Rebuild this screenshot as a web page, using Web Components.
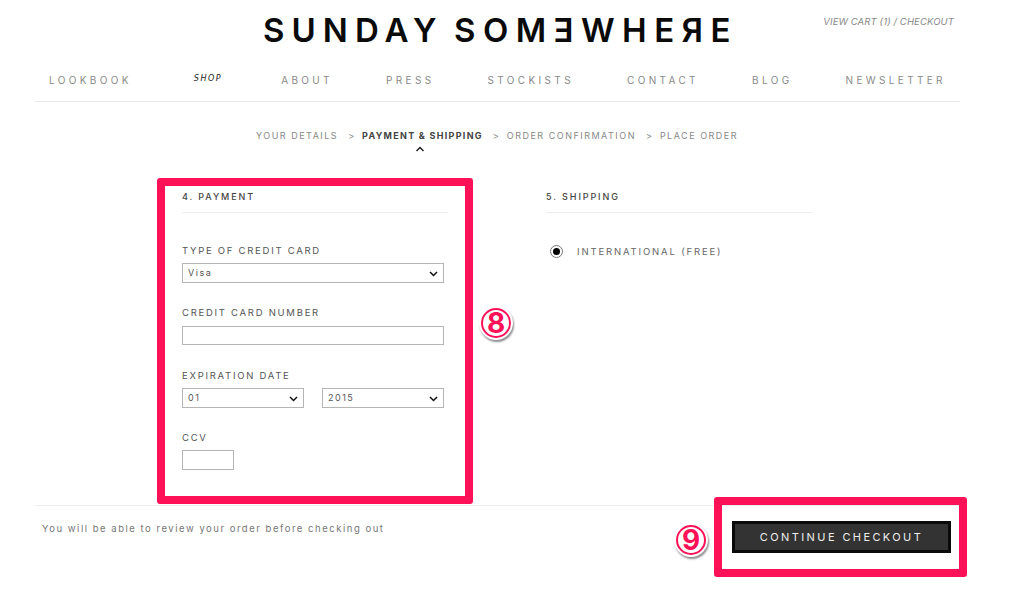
<!DOCTYPE html>
<html><head><meta charset="utf-8"><title>Sunday Somewhere</title>
<style>
html,body{margin:0;padding:0;background:#fff}
body{font-family:Inter,"Liberation Sans",sans-serif;color:#555;width:1010px;height:603px;overflow:hidden;position:relative}
</style></head><body>
<ss-page>
  <ss-header></ss-header>
  <ss-steps></ss-steps>
  <ss-columns>
    <ss-section heading="4. PAYMENT">
      <ss-field label="TYPE OF CREDIT CARD" style="--top:31px"><ss-select value="Visa" style="width:262px"></ss-select></ss-field>
      <ss-field label="CREDIT CARD NUMBER" style="--top:23px;--mb:6px"><ss-input style="width:262px;--h:19px"></ss-input></ss-field>
      <ss-field label="EXPIRATION DATE" style="--top:24px">
        <ss-row><ss-select value="01" style="width:122px"></ss-select><ss-select value="2015" style="width:122px"></ss-select></ss-row>
      </ss-field>
      <ss-field label="CCV" style="--top:23px"><ss-input style="width:52px;--h:20px"></ss-input></ss-field>
    </ss-section>
    <ss-section heading="5. SHIPPING"><ss-radio label="INTERNATIONAL (FREE)"></ss-radio></ss-section>
  </ss-columns>
  <ss-footer></ss-footer>
</ss-page>
<ss-callout style="left:157px;top:178px;width:316px;height:326px"></ss-callout>
<ss-callout style="left:714px;top:497px;width:253px;height:80px"></ss-callout>
<ss-badge n="8" style="left:479px;top:306px"></ss-badge>
<ss-badge n="9" style="left:674px;top:523px"></ss-badge>
<script>
function def(name, html){
  customElements.define(name, class extends HTMLElement{
    constructor(){super();this.attachShadow({mode:'open'}).innerHTML=html;}
    connectedCallback(){
      this.shadowRoot.querySelectorAll('[data-attr]').forEach(e=>{e.textContent=this.getAttribute(e.dataset.attr)||''});
    }
  });
}
def('ss-page',`<style>:host{display:block}</style><slot></slot>`);
def('ss-header',`<style>
:host{display:block;margin:0 50px 0 35px;height:102px;box-sizing:border-box;border-bottom:1px solid #e9e9e9;position:relative}
.logo{display:block;text-align:center;font:600 33px/36px Inter,sans-serif;letter-spacing:7.05px;word-spacing:-5px;color:#0a0a0a;padding:12px 0 0 6px;height:36px;white-space:pre}
.logo span{letter-spacing:7.45px}
.cart{position:absolute;right:6px;top:15px;font:italic 400 9.5px/13px Inter,sans-serif;color:#888;letter-spacing:.12px}
nav{display:flex;justify-content:space-between;padding:25px 14px 0 14px;font:400 10px/14px Inter,sans-serif;letter-spacing:3.35px;color:#8a8a8a}
nav i{font:italic 400 8px/12px "DejaVu Sans",sans-serif;color:#222;letter-spacing:1.5px;padding:0 5px 0 9px}
nav .n{margin-left:1px}
</style>
<div class="logo">SUNDAY <span>SOMƎWHEЯE</span></div>
<div class="cart">VIEW CART (1) / CHECKOUT</div>
<nav><span>LOOKBOOK</span><i>SHOP</i><span class="n">ABOUT</span><span>PRESS</span><span>STOCKISTS</span><span>CONTACT</span><span>BLOG</span><span>NEWSLETTER</span></nav>`);
def('ss-steps',`<style>
:host{display:flex;justify-content:center;align-items:flex-start;gap:8px;height:74px;padding:27px 0 0 0;box-sizing:border-box;margin-left:-16px;font:400 9px/13px Inter,sans-serif;letter-spacing:1.5px;color:#888;white-space:nowrap}
b{font-weight:700;color:#444;position:relative;letter-spacing:1.28px}
b svg{position:absolute;left:53px;top:17px}
.g{margin-left:2px;letter-spacing:0}
</style>
<span>YOUR DETAILS</span><span class="g">&gt;</span><b>PAYMENT &amp; SHIPPING<svg width="10" height="6" viewBox="0 0 10 6"><path d="M1.5 5 5 1.5 8.500 5" fill="none" stroke="#222" stroke-width="1.500"/></svg></b><span class="g">&gt;</span><span>ORDER CONFIRMATION</span><span class="g">&gt;</span><span>PLACE ORDER</span>`);
def('ss-columns',`<style>:host{display:flex;gap:98px;padding-left:182px;height:329px;align-items:flex-start}</style><slot></slot>`);
def('ss-section',`<style>
:host{display:block;width:266px}
h2{margin:0;padding:14px 0 9px;height:13px;font:500 9px/13px Inter,sans-serif;letter-spacing:1.9px;color:#444;border-bottom:1px solid #eee}
</style><h2 data-attr="heading"></h2><slot></slot>`);
def('ss-field',`<style>
:host{display:block;padding-top:var(--top,24px)}
label{display:block;font:400 9.5px/14px Inter,sans-serif;letter-spacing:1.73px;color:#555;margin-bottom:var(--mb,5px)}
</style><label data-attr="label"></label><slot></slot>`);
def('ss-row',`<style>:host{display:flex;gap:18px}</style><slot></slot>`);
def('ss-select',`<style>
:host{display:block;box-sizing:border-box;height:20px;border:1px solid #b5b5b5;position:relative;font:400 9px/17px Inter,sans-serif;letter-spacing:1.5px;color:#555;padding-left:5px}
svg{position:absolute;right:5px;top:7px}
</style><span data-attr="value"></span><svg width="9" height="6" viewBox="0 0 9 6"><path d="M1 1 4.500 4.500 8 1" fill="none" stroke="#111" stroke-width="1.500"/></svg>`);
def('ss-input',`<style>:host{display:block;box-sizing:border-box;height:var(--h,20px);border:1px solid #b5b5b5;background:#fff}</style>`);
def('ss-radio',`<style>
:host{display:flex;align-items:center;gap:14px;padding:32px 0 0 4px;font:400 9.5px/13px Inter,sans-serif;letter-spacing:1.85px;color:#666}
.r{width:13px;height:13px;box-sizing:border-box;border:1px solid #777;border-radius:50%;display:flex;align-items:center;justify-content:center}
.r::after{content:"";width:7px;height:7px;border-radius:50%;background:#000}
</style><span class="r"></span><span data-attr="label"></span>`);
def('ss-footer',`<style>
:host{display:flex;justify-content:space-between;align-items:flex-start;margin:0 50px 0 35px;height:90px;box-sizing:border-box;border-top:1px solid #eee;padding:16px 9px 0 7px;font:400 9.500px/14px Inter,sans-serif;letter-spacing:1.52px;color:#777}
button{all:unset;box-sizing:border-box;width:219px;height:32px;margin-top:-1px;border:3px solid #0a0a0a;background:#333;color:#eee;text-align:center;font:400 11px/26px Inter,sans-serif;letter-spacing:2.4px}
</style><span>You will be able to review your order before checking out</span><button>CONTINUE CHECKOUT</button>`);
def('ss-callout',`<style>:host{display:block;position:absolute;box-sizing:border-box;border:8px solid #ff1158;border-radius:3px}</style>`);
def('ss-badge',`<style>
:host{display:flex;position:absolute;box-sizing:border-box;width:34px;height:34px;border-radius:50%;background:#fff;box-shadow:1px 2px 2px rgba(0,0,0,.45);align-items:center;justify-content:center}
span{box-sizing:border-box;width:30px;height:30px;border:2px solid #ff1158;border-radius:50%;display:flex;align-items:center;justify-content:center;font:700 28px/26px Inter,sans-serif;color:#ff1158}
</style><span data-attr="n"></span>`);
</script>
</body></html>
